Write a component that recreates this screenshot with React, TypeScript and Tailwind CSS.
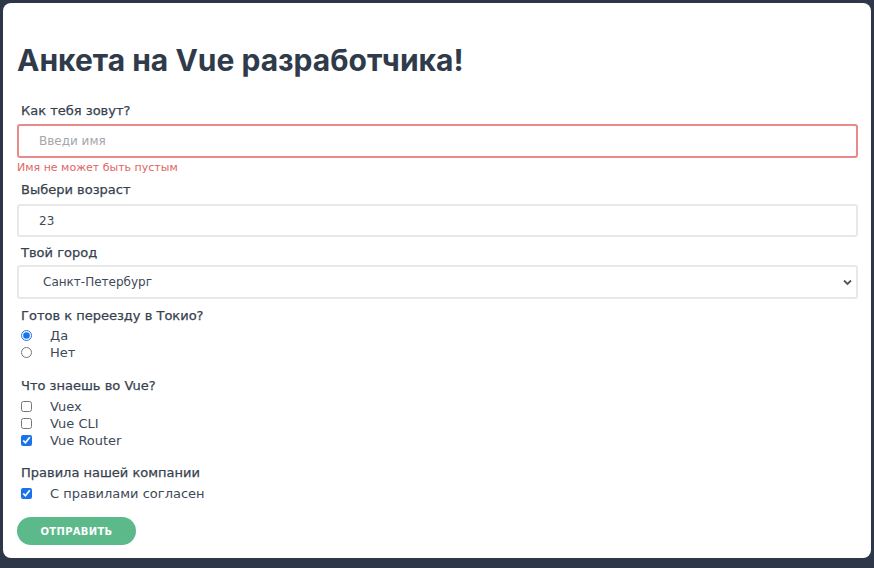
import React, { useState } from 'react';

const skills = ['Vuex', 'Vue CLI', 'Vue Router'];

const labelCls = "pl-1 h-[16px] leading-[16px] text-[13px] text-[#36424f] [-webkit-text-stroke:0.25px_#36424f]";
const rowCls = "flex items-center h-[17px] leading-[17px] text-[13px] pl-1 text-[#3d4a58]";

export default function App() {
    const [name, setName] = useState('');
    const [age, setAge] = useState('23');
    const [city, setCity] = useState('spb');
    const [relocate, setRelocate] = useState('yes');
    const [known, setKnown] = useState<string[]>(['Vue Router']);
    const [agree, setAgree] = useState(true);

    const toggleSkill = (s: string) =>
        setKnown(prev => (prev.includes(s) ? prev.filter(x => x !== s) : [...prev, s]));

    return (
        <div className="h-screen bg-[#2d3748] pt-[3px] px-[3px] pb-[10px] font-['DejaVu_Sans',sans-serif] text-[#2c3e50]">
            <div className="h-full bg-white rounded-lg pl-[14px] pr-[13px] pt-[39px]">
                <h1 className="font-['Inter',sans-serif] text-[30px] h-[36px] leading-[36px] font-bold text-[#2f3b4a] mb-[25px]">Анкета на Vue разработчика!</h1>

                <form onSubmit={e => e.preventDefault()} className="flex flex-col">
                    <label className={labelCls + " mb-[5px]"}>Как тебя зовут?</label>
                    <input
                        value={name}
                        onChange={e => setName(e.target.value)}
                        placeholder="Введи имя"
                        className="h-[34px] border-2 border-[#e88a8a] rounded-[3px] px-5 text-[12px] outline-none placeholder:text-[#a3a7ab]"
                    />
                    <div className="h-[14px] leading-[14px] text-[11px] text-[#e06666] mt-[3px] mb-[7px]">Имя не может быть пустым</div>

                    <label className={labelCls + " mb-[6px]"}>Выбери возраст</label>
                    <input
                        value={age}
                        onChange={e => setAge(e.target.value)}
                        className="h-[33px] border-2 border-[#e8e8e8] rounded-[3px] px-5 text-[12px] text-[#3d4a58] outline-none"
                    />

                    <label className={labelCls + " mt-[8px] mb-[4px]"}>Твой город</label>
                    <div className="relative">
                        <select
                            value={city}
                            onChange={e => setCity(e.target.value)}
                            className="w-full h-[34px] appearance-none border-2 border-[#e8e8e8] rounded-[3px] pl-[24px] text-[12px] text-[#3d4a58] outline-none bg-white"
                        >
                            <option value="spb">Санкт-Петербург</option>
                            <option value="msk">Москва</option>
                        </select>
                        <svg className="absolute right-[6px] top-[14px] pointer-events-none" width="9" height="7" viewBox="0 0 9 7">
                            <path d="M1 1.5 L4.5 5 L8 1.5" stroke="#555" strokeWidth="1.8" fill="none" />
                        </svg>
                    </div>

                    <label className={labelCls + " mt-[9px] mb-[3px]"}>Готов к переезду в Токио?</label>
                    {[
                        ['yes', 'Да'],
                        ['no', 'Нет'],
                    ].map(([v, t]) => (
                        <label key={v} className={rowCls}>
                            <input
                                type="radio"
                                name="relocate"
                                checked={relocate === v}
                                onChange={() => setRelocate(v)}
                                className="w-[11px] h-[11px] m-0 accent-[#1a73e8]"
                            />
                            <span className="ml-[18px]">{t}</span>
                        </label>
                    ))}

                    <label className={labelCls + " mt-[17px] mb-[4px]"}>Что знаешь во Vue?</label>
                    {skills.map(s => (
                        <label key={s} className={rowCls}>
                            <input
                                type="checkbox"
                                checked={known.includes(s)}
                                onChange={() => toggleSkill(s)}
                                className="w-[11px] h-[11px] m-0 accent-[#1a73e8]"
                            />
                            <span className="ml-[18px]">{s}</span>
                        </label>
                    ))}

                    <label className={labelCls + " mt-[16px] mb-[4px]"}>Правила нашей компании</label>
                    <label className={rowCls}>
                        <input
                            type="checkbox"
                            checked={agree}
                            onChange={() => setAgree(!agree)}
                            className="w-[11px] h-[11px] m-0 accent-[#1a73e8]"
                        />
                        <span className="ml-[18px]">С правилами согласен</span>
                    </label>

                    <button
                        type="submit"
                        className="self-start mt-[15px] w-[119px] h-[28px] rounded-full bg-[#5cb98a] text-white text-[10px] font-bold tracking-[0.3px]"
                    >
                        ОТПРАВИТЬ
                    </button>
                </form>
            </div>
        </div>
    );
}
